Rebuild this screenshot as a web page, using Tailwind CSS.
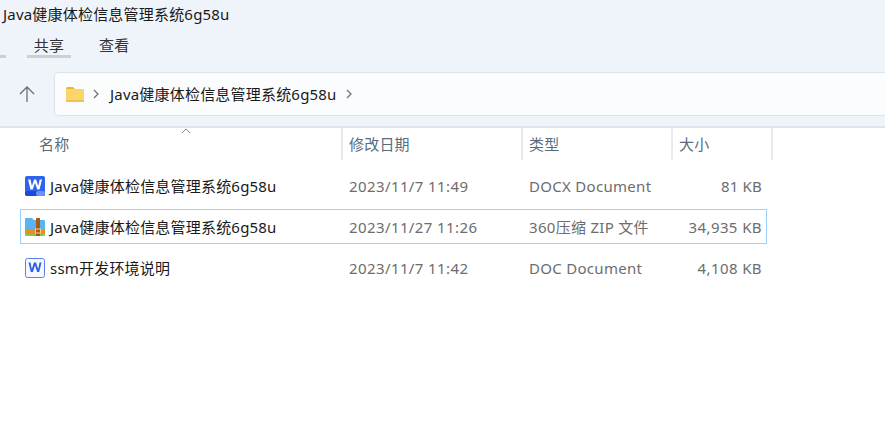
<!DOCTYPE html>
<html lang="zh-CN">
  <head>
    <meta charset="UTF-8" />
    <title>Java健康体检信息管理系统6g58u</title>
    <script src="https://cdn.jsdelivr.net/npm/@tailwindcss/browser@4"></script>
  </head>
  <body class="w-[885px] h-[434px] overflow-hidden bg-white text-[15px] leading-5 tracking-[0.2px] font-['Noto_Sans','Noto_Sans_CJK_SC',sans-serif] text-[#1a1a1a]">
    <!-- title + ribbon tabs -->
    <div class="h-[72px] bg-[#eff4fb]">
      <div class="h-[29px] pl-[3px] pt-[4px]">Java健康体检信息管理系统6g58u</div>
      <div class="flex h-[29px] pt-[6px]">
        <div class="w-[6px] h-[23px] flex items-end"><div class="w-[6px] h-[3px] bg-[#cfcfcf]"></div></div>
        <div class="ml-[21px] w-[44px] h-[23px] text-center text-[#333] border-b-[3px] border-[#cfcfcf]">共享</div>
        <div class="ml-[28px] text-[#333]">查看</div>
      </div>
    </div>
    <!-- address bar -->
    <div class="h-[56px] bg-[#eff4fb] border-b-2 border-[#dfe3e8] flex items-start">
      <div class="w-[54px] h-[44px] flex items-center justify-center">
        <svg width="18" height="18" viewBox="0 0 18 18" fill="none" stroke="#6b6f75" stroke-width="1.3"><path d="M9 17V2M2 9l7-7 7 7" /></svg>
      </div>
      <div class="w-[831px] h-[44px] bg-[#fbfcfe] border border-r-0 border-[#dfe3e8] rounded-l-[5px] flex items-center pl-[11px]">
        <svg width="18" height="15" viewBox="0 0 18 15"><path d="M0 1.500A1.500 1.500 0 0 1 1.500 0H7l2 2H0z" fill="#f2b52c" /><rect y="2" width="18" height="13" rx="1" fill="#fbd568" /><rect y="13" width="18" height="2" fill="#f0c14f" /></svg>
        <svg class="ml-[9px]" width="6" height="10" viewBox="0 0 6 10" fill="none" stroke="#6f6f6f" stroke-width="1.200"><path d="M1 1l4 4-4 4" /></svg>
        <span class="ml-[11px]">Java健康体检信息管理系统6g58u</span>
        <svg class="ml-[9px]" width="6" height="10" viewBox="0 0 6 10" fill="none" stroke="#6f6f6f" stroke-width="1.200"><path d="M1 1l4 4-4 4" /></svg>
      </div>
    </div>
    <!-- column header -->
    <div class="relative flex h-[32px] text-[#5b6b7b]">
      <svg class="absolute left-[181px] top-0" width="10" height="6" viewBox="0 0 10 6" fill="none" stroke="#8a8a8a"><path d="M1 5l4-4 4 4" /></svg>
      <div class="w-[343px] pl-[39px] pt-[6px] border-r-2 border-[#e8eaed]">名称</div>
      <div class="w-[180px] pl-[6px] pt-[6px] border-r-2 border-[#e8eaed]">修改日期</div>
      <div class="w-[150px] pl-[6px] pt-[6px] border-r-2 border-[#e8eaed]">类型</div>
      <div class="w-[100px] pl-[6px] pt-[6px] border-r-2 border-[#e8eaed]">大小</div>
    </div>
    <!-- rows -->
    <div class="pl-[20px] pt-[8px]">
      <div class="flex items-center w-[747px] h-[35px] pl-[4px] border border-transparent">
        <svg width="20" height="20" viewBox="0 0 20 20"><rect width="20" height="20" rx="2" fill="#2f63ee" /><rect y="15" width="20" height="5" rx="2" fill="#1c49d8" /><rect x="11" y="15" width="9" height="5" rx="2" fill="#6b94f5" /><path d="M3 3.500l2.500 10h2.200L10 7l2.300 6.500h2.200l2.500-10h-2.300l-1.400 6.500-2.200-6.500H9.100l-2.200 6.500-1.400-6.500z" fill="#fff" /></svg>
        <div class="w-[304px] pl-[5px]">Java健康体检信息管理系统6g58u</div>
        <div class="w-[180px] text-[#6d6d6d] tracking-[0.4px]">2023/11/7 11:49</div>
        <div class="w-[150px] text-[#6d6d6d] tracking-[0.3px]">DOCX Document</div>
        <div class="w-[83px] text-right text-[#6d6d6d]">81 KB</div>
      </div>
      <div class="flex items-center w-[747px] h-[35px] mt-[6px] pl-[4px] border border-[#99d1ff]">
        <svg width="20" height="20" viewBox="0 0 20 20"><path d="M0 2a1 1 0 0 1 1-1h6l2 2h10a1 1 0 0 1 1 1v10H0z" fill="#5bb4f0" /><rect y="12" width="20" height="5" fill="#f08c1e" /><rect y="17" width="20" height="2" rx="1" fill="#8cc63f" /><rect x="11" y="1" width="4" height="18" fill="#a65a1e" /><rect x="10.500" y="12" width="5" height="4" fill="none" stroke="#f5d08a" /></svg>
        <div class="w-[304px] pl-[5px]">Java健康体检信息管理系统6g58u</div>
        <div class="w-[180px] text-[#6d6d6d] tracking-[0.4px]">2023/11/27 11:26</div>
        <div class="w-[150px] text-[#6d6d6d] tracking-[0.3px]">360压缩 ZIP 文件</div>
        <div class="w-[83px] text-right text-[#6d6d6d] tracking-[0.4px]">34,935 KB</div>
      </div>
      <div class="flex items-center w-[747px] h-[35px] mt-[6px] pl-[4px] border border-transparent">
        <svg width="20" height="20" viewBox="0 0 20 20"><rect x="0.500" y="0.500" width="19" height="19" rx="2" fill="#f4f7ff" stroke="#5a80ee" /><path d="M3.500 4.500l2.300 9.500h2.100L10 7.500l2.100 6.500h2.100l2.300-9.500h-2L13.200 11 11 4.500H9L6.800 11 5.500 4.500z" fill="#2f5fe8" /></svg>
        <div class="w-[304px] pl-[5px]">ssm开发环境说明</div>
        <div class="w-[180px] text-[#6d6d6d] tracking-[0.4px]">2023/11/7 11:42</div>
        <div class="w-[150px] text-[#6d6d6d] tracking-[0.3px]">DOC Document</div>
        <div class="w-[83px] text-right text-[#6d6d6d] tracking-[0.4px]">4,108 KB</div>
      </div>
    </div>
  </body>
</html>
